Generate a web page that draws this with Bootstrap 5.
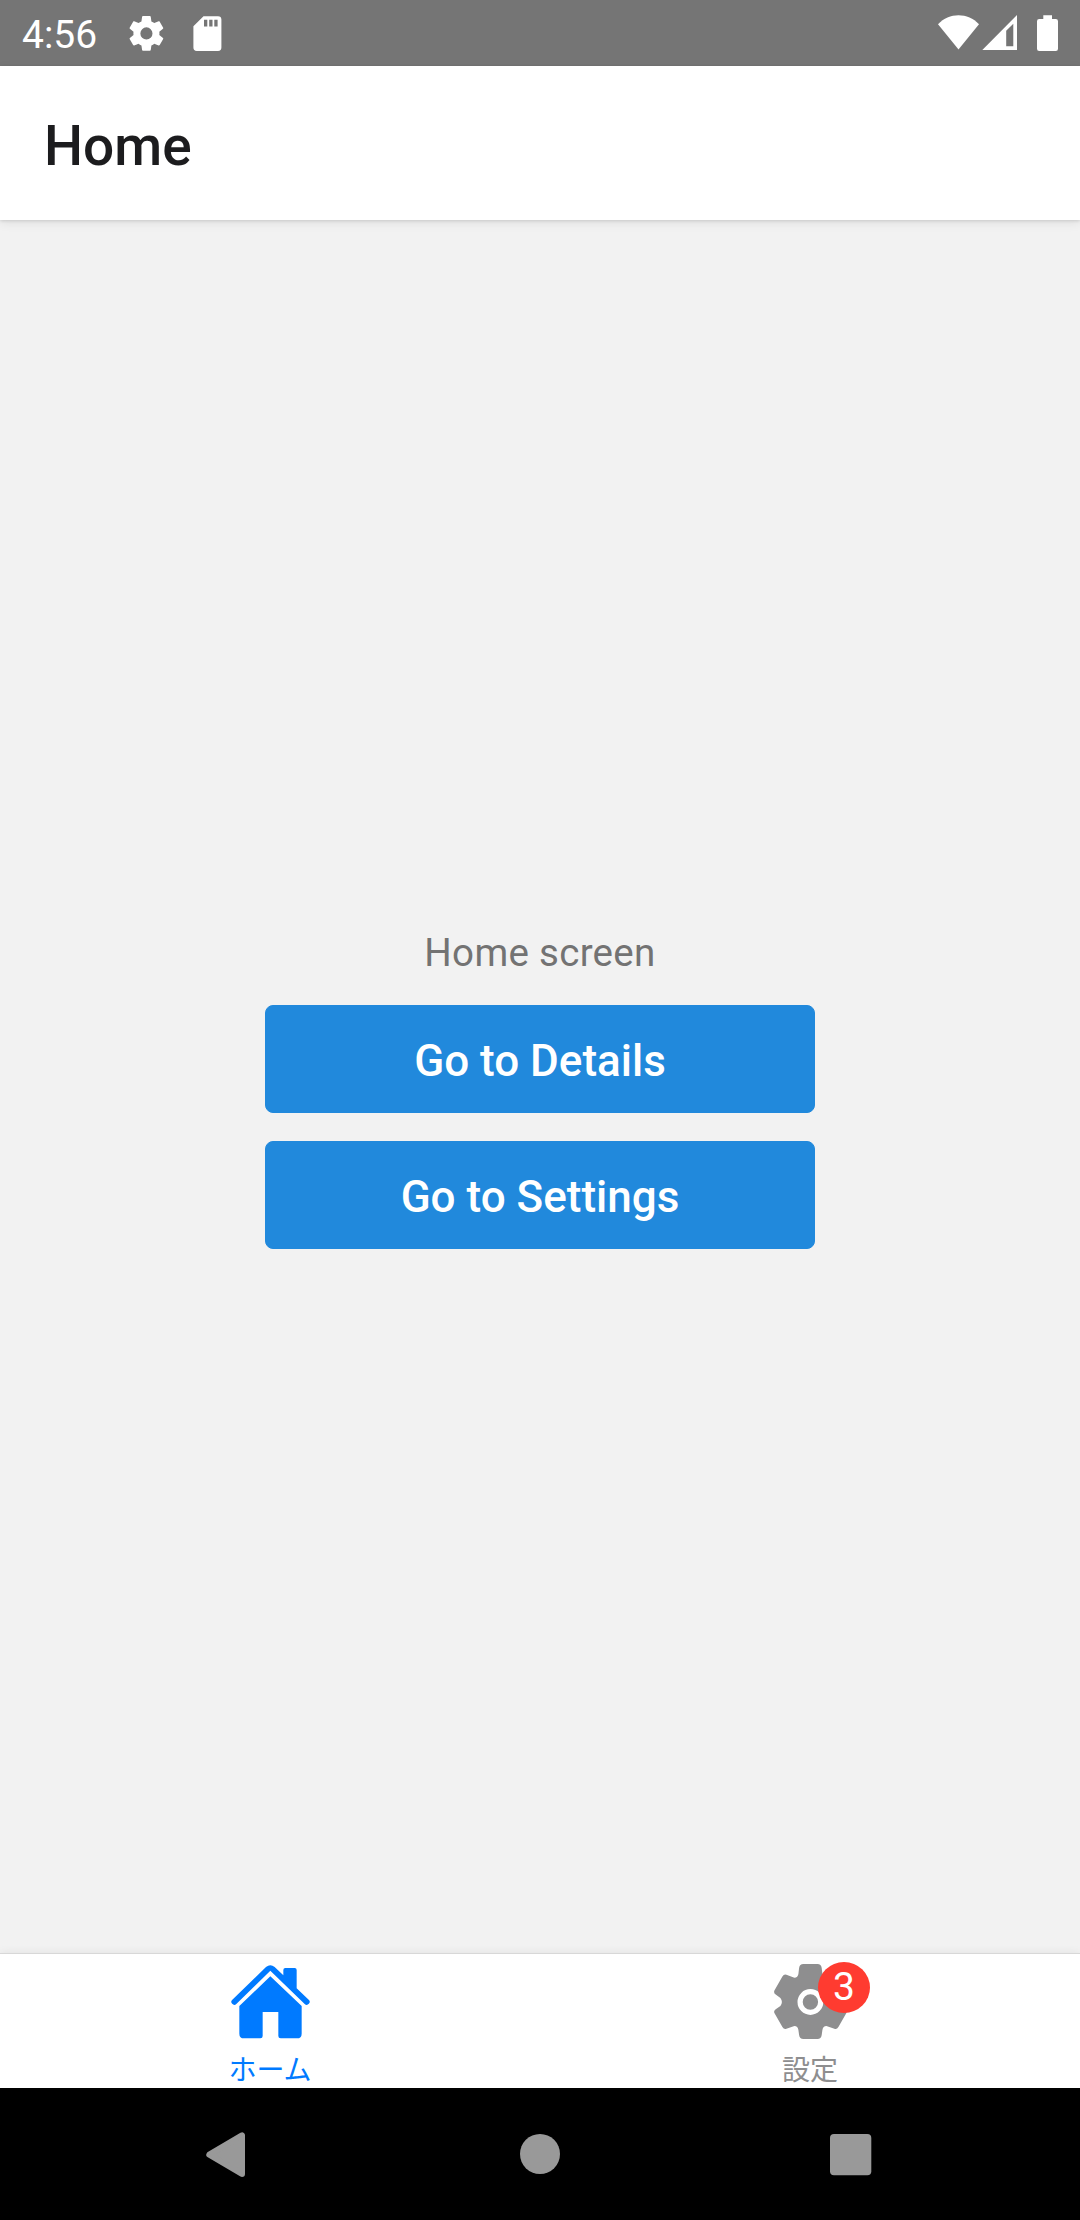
<!DOCTYPE html>
<html lang="ja">
<head>
<meta charset="utf-8">
<meta name="viewport" content="width=device-width, initial-scale=1">
<title>Home</title>
<link rel="stylesheet" href="https://cdn.jsdelivr.net/npm/bootstrap@5.3.0/dist/css/bootstrap.min.css">
<style>
body{font-family:Roboto,"Noto Sans CJK JP",sans-serif;background:#f2f2f2}
svg{display:block;flex:none}
.phone{height:2220px;overflow:hidden}
.status{height:66px;background:#757575;color:#fff;padding:0 22px;font-size:39px}
.clock{width:106px;line-height:66px;padding-top:3px}
.topbar{height:154px;background:#fff;z-index:1;padding:6px 44px 0;box-shadow:0 1px 3px rgba(0,0,0,.12),0 3px 10px rgba(0,0,0,.08)}
.topbar h1{font-size:55px;font-weight:500;color:#1c1c1e;line-height:1.2}
main{padding-top:2px}
.screen-label{font-size:38.5px;line-height:52px;color:#737373;letter-spacing:.3px;padding-top:1px;margin-bottom:26px}
.go{width:550px;height:108px;--bs-btn-bg:#2189dc;--bs-btn-border-color:#2189dc;--bs-btn-hover-bg:#1c79c4;--bs-btn-border-radius:8px;--bs-btn-color:#fff;--bs-btn-hover-color:#fff;font-size:44px;font-weight:500;padding:4px 0 0;line-height:1}
.tabs{height:135px;background:#fff;border-top:1px solid #d8d8d8;box-shadow:0 -1px 8px rgba(0,0,0,.06);font-size:28px}
.tabs a{padding-top:6px;color:#8e8e8f;text-decoration:none}
.tabs a.active{color:#007aff}
.tabs span.caption-jp{line-height:28px;margin-top:14px;font-family:"Noto Sans CJK JP",sans-serif}
.count{position:absolute;left:48px;top:2px;width:52px;height:51px;border-radius:50%;background:#ff3b30;color:#fff;font-size:39px;line-height:51px;text-align:center}
.sysnav{height:132px;background:#000}
.sysnav .keys{width:930px}
</style>
<script src="https://cdn.jsdelivr.net/npm/bootstrap@5.3.0/dist/js/bootstrap.bundle.min.js"></script>
</head>
<body>
<div class="phone d-flex flex-column">
  <div class="status d-flex align-items-center flex-shrink-0">
    <div class="clock">4:56</div>
    <svg width="38" height="66" viewBox="128 0 38 66"><path fill="#fff" transform="translate(125.6 12.6) scale(1.735)" d="M19.43 12.98c.04-.32.07-.64.07-.98s-.03-.66-.07-.98l2.11-1.65c.19-.15.24-.42.12-.64l-2-3.46c-.12-.22-.39-.3-.61-.22l-2.49 1c-.52-.4-1.08-.73-1.69-.98l-.38-2.65C14.46 2.18 14.25 2 14 2h-4c-.25 0-.46.18-.49.42l-.38 2.65c-.61.25-1.17.59-1.69.98l-2.49-1c-.23-.09-.49 0-.61.22l-2 3.46c-.13.22-.07.49.12.64l2.11 1.65c-.04.32-.07.65-.07.98s.03.66.07.98l-2.11 1.65c-.19.15-.24.42-.12.64l2 3.46c.12.22.39.3.61.22l2.49-1c.52.4 1.08.73 1.69.98l.38 2.65c.03.24.24.42.49.42h4c.25 0 .46-.18.49-.42l.38-2.65c.61-.25 1.17-.59 1.69-.98l2.49 1c.23.09.49 0 .61-.22l2-3.46c.12-.22.07-.49-.12-.64zM12 15.5A3.5 3.5 0 1 1 12 8.500a3.500 3.500 0 0 1 0 7z"/></svg>
    <svg class="ms-4" width="38" height="66" viewBox="190 0 38 66"><path fill="#fff" d="M203.500 16.200H218a3.400 3.400 0 0 1 3.400 3.400V47.500a3.400 3.400 0 0 1-3.400 3.400H196.800a3.400 3.400 0 0 1-3.400-3.400V26.300z"/><path fill="#757575" d="M204 19.700h3.300v6.900H204zM209.200 19.700h3.300v6.900h-3.300zM214.300 19.700h3.300v6.900h-3.300z"/></svg>
    <svg class="ms-auto" width="122" height="66" viewBox="936 0 122 66"><path fill="#fff" d="M938 24.300C949 12.300 968 12.300 979 24.300L958.500 49.500z"/><path fill="#fff" fill-rule="evenodd" d="M982.300 50 1017 15V50zM1006.200 30.800V46.200H1013.300V23.700z"/><path fill="#fff" d="M1043.300 15.300h8.700V19h3.800a2.200 2.200 0 0 1 2.200 2.200V48.700a2.200 2.200 0 0 1-2.200 2.200h-16.600a2.200 2.200 0 0 1-2.200-2.200V21.200a2.200 2.200 0 0 1 2.200-2.200h4.100z"/></svg>
  </div>

  <header class="topbar d-flex align-items-center flex-shrink-0 position-relative"><h1 class="m-0">Home</h1></header>

  <main class="flex-grow-1 d-flex flex-column align-items-center justify-content-center">
    <div class="screen-label">Home screen</div>
    <div class="d-flex flex-column gap-4">
      <button type="button" class="btn go mb-1">Go to Details</button>
      <button type="button" class="btn go">Go to Settings</button>
    </div>
  </main>

  <nav class="tabs d-flex flex-shrink-0">
    <a href="#" class="active col-6 d-flex flex-column align-items-center">
      <svg width="80" height="80" viewBox="90 60 240 240"><g fill="#007aff"><path d="M198 81Q211 70 224 81L250 106V90Q250 84 256 84H284Q290 84 290 90V145L326 179A8.500 8.500 0 0 1 314 192L211 92 109 192A8.500 8.500 0 0 1 97 179z"/><path d="M211 109 305 198V281Q305 295 291 295H242Q235 295 235 288V216H188V288Q188 295 181 295H132Q118 295 118 281V198z"/></g></svg>
      <span class="caption-jp">ホーム</span>
    </a>
    <a href="#" class="col-6 d-flex flex-column align-items-center">
      <div class="position-relative">
        <svg width="80" height="80" viewBox="-40.400 -42 80 80"><path fill="#8e8e8f" d="M-7-38H7Q10.800-38 11.300-34L12-28Q12.600-24.500 16-24.300L24-27.200Q26.500-28 28-25.500L36-11.500Q37-9 34.700-7.500L30-4Q27 0 30 4L34.700 7.300Q37 9 36 11L28 25Q26.500 27.600 24 26.800L16 24Q12.600 24.200 12 28L11.300 33Q10.800 37 7 37H-7Q-10.800 37-11.300 33L-12 28Q-12.600 24.200-16 24L-24 26.800Q-26.500 27.600-28 25L-36 11Q-37 9-34.700 7.300L-30 4Q-27 0-30-4L-34.700-7.500Q-37-9-36-11.500L-28-25.500Q-26.500-28-24-27.200L-16-24.300Q-12.600-24.500-12-28L-11.300-34Q-10.800-38-7-38z"/><circle r="10.300" fill="none" stroke="#fff" stroke-width="5.200"/></svg>
        <div class="count">3</div>
      </div>
      <span class="caption-jp">設定</span>
    </a>
  </nav>

  <div class="sysnav d-flex justify-content-center flex-shrink-0">
    <div class="keys d-flex align-items-center">
      <div class="col-4 d-flex justify-content-center"><svg width="60" height="132" viewBox="200 2088 60 132"><path fill="#999" stroke="#999" stroke-width="6" stroke-linejoin="round" d="M209.300 2154.700 242 2135.300V2174z"/></svg></div>
      <div class="col-4 d-flex justify-content-center"><svg width="60" height="132" viewBox="510 2088 60 132"><circle cx="540" cy="2154" r="20" fill="#999"/></svg></div>
      <div class="col-4 d-flex justify-content-center"><svg width="60" height="132" viewBox="820 2088 60 132"><rect x="830" y="2134" width="41.300" height="41.300" rx="4" fill="#999"/></svg></div>
    </div>
  </div>
</div>
</body>
</html>
